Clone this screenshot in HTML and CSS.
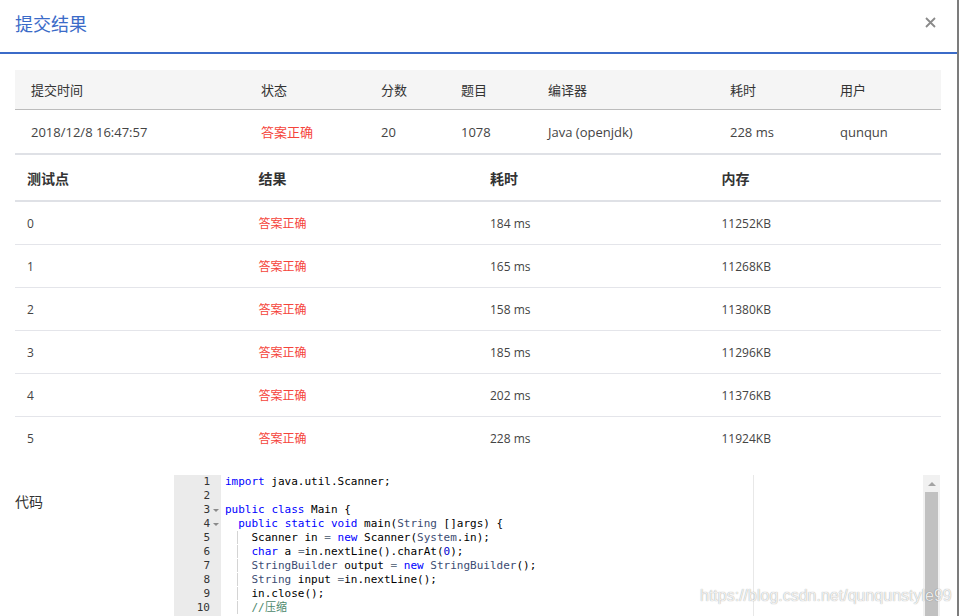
FILE: index.html
```html
<!DOCTYPE html>
<html lang="zh-CN">
<head>
<meta charset="utf-8">
<title>提交结果</title>
<link rel="stylesheet" href="styles.css">
</head>
<body>
<div class="modal">
  <div class="modal-header">
    <h1 class="title">提交结果</h1>
    <svg class="close" width="11" height="11" viewBox="0 0 11 11"><path d="M1 1L10 10M10 1L1 10" stroke="#8a8a8a" stroke-width="1.8" fill="none"/></svg>
  </div>
  <div class="modal-body">
    <div class="t1">
      <div class="t1-head">
        <div>提交时间</div><div>状态</div><div>分数</div><div>题目</div><div>编译器</div><div>耗时</div><div>用户</div>
      </div>
      <div class="t1-row">
        <div>2018/12/8 16:47:57</div><div class="ok">答案正确</div><div>20</div><div>1078</div><div>Java (openjdk)</div><div>228 ms</div><div>qunqun</div>
      </div>
    </div>
    <div class="t2">
      <div class="t2-head"><div>测试点</div><div>结果</div><div>耗时</div><div>内存</div></div>
      <div class="t2-row"><div>0</div><div class="ok">答案正确</div><div>184 ms</div><div>11252KB</div></div>
      <div class="t2-row"><div>1</div><div class="ok">答案正确</div><div>165 ms</div><div>11268KB</div></div>
      <div class="t2-row"><div>2</div><div class="ok">答案正确</div><div>158 ms</div><div>11380KB</div></div>
      <div class="t2-row"><div>3</div><div class="ok">答案正确</div><div>185 ms</div><div>11296KB</div></div>
      <div class="t2-row"><div>4</div><div class="ok">答案正确</div><div>202 ms</div><div>11376KB</div></div>
      <div class="t2-row"><div>5</div><div class="ok">答案正确</div><div>228 ms</div><div>11924KB</div></div>
    </div>
    <div class="code-section">
      <div class="code-label">代码</div>
      <div class="editor">
        <div class="gutter">
          <div class="gl">1<span class="fold"></span></div>
          <div class="gl">2<span class="fold"></span></div>
          <div class="gl">3<span class="fold"><i class="tri"></i></span></div>
          <div class="gl">4<span class="fold"><i class="tri"></i></span></div>
          <div class="gl">5<span class="fold"></span></div>
          <div class="gl">6<span class="fold"></span></div>
          <div class="gl">7<span class="fold"></span></div>
          <div class="gl">8<span class="fold"></span></div>
          <div class="gl">9<span class="fold"></span></div>
          <div class="gl">10<span class="fold"></span></div>
        </div>
        <div class="code">
          <div class="print-margin"></div>
          <div class="cl"><span class="kw">import</span> java.util.Scanner;</div>
          <div class="cl"> </div>
          <div class="cl"><span class="kw">public</span> <span class="kw">class</span> Main {</div>
          <div class="cl">  <span class="kw">public</span> <span class="kw">static</span> <span class="kw">void</span> main(<span class="sf">String</span> []args) {</div>
          <div class="cl"><span class="ind">  </span>  Scanner in <span class="op">=</span> <span class="kw">new</span> Scanner(<span class="sf">System</span>.in);</div>
          <div class="cl"><span class="ind">  </span>  <span class="kw">char</span> a <span class="op">=</span>in.nextLine().charAt(<span class="num">0</span>);</div>
          <div class="cl"><span class="ind">  </span>  <span class="sf">StringBuilder</span> output <span class="op">=</span> <span class="kw">new</span> <span class="sf">StringBuilder</span>();</div>
          <div class="cl"><span class="ind">  </span>  <span class="sf">String</span> input <span class="op">=</span>in.nextLine();</div>
          <div class="cl"><span class="ind">  </span>  in.close();</div>
          <div class="cl"><span class="ind">  </span>  <span class="cm">//压缩</span></div>
        </div>
        <div class="scrollbar">
          <div class="sb-up"><i class="sb-tri"></i></div>
          <div class="sb-thumb"></div>
        </div>
      </div>
    </div>
  </div>
  <div class="watermark">https://blog.csdn.net/qunqunstyle99</div>
</div>
</body>
</html>
```
FILE: styles.css
```css
html, body {
  margin: 0;
  padding: 0;
  background: #fff;
}
body {
  font-family: "Open Sans", "Noto Sans CJK SC", sans-serif;
  color: #444;
}
.modal {
  position: relative;
  width: 957px;
  height: 616px;
  border-right: 2px solid #7c7c7c;
  overflow: hidden;
  background: #fff;
}
.modal-header {
  height: 54px;
  box-sizing: border-box;
  border-bottom: 2px solid #3b6bc8;
  display: flex;
  align-items: center;
  justify-content: space-between;
  padding: 0 21px 7px 15px;
}
.title {
  margin: 0;
  font-size: 18px;
  font-weight: normal;
  line-height: 24px;
  color: #3b6bc8;
  font-family: "Noto Sans CJK SC", sans-serif;
}
.close {
  display: block;
}
.modal-body {
  padding: 16px 16px 0 15px;
}
.t1-head, .t1-row {
  display: grid;
  grid-template-columns: 230px 120px 80px 87px 182px 110px 117px;
  align-items: center;
  box-sizing: border-box;
  font-size: 13px;
}
.t1-head > div, .t1-row > div {
  padding-left: 16px;
}
.t1-head {
  height: 40px;
  background: #f5f5f5;
  border-bottom: 1px solid #bcbcbc;
  color: #333;
}
.t1-row {
  height: 43px;
  color: #444;
}
.ok {
  color: #f5443b;
}
.t2 {
  border-top: 2px solid #dfe1e6;
}
.t2-head, .t2-row {
  display: grid;
  grid-template-columns: repeat(4, 1fr);
  align-items: center;
  box-sizing: border-box;
}
.t2-head > div, .t2-row > div {
  padding-left: 12px;
}
.t2-head {
  height: 47px;
  border-bottom: 2px solid #dfe1e6;
  font-size: 14px;
  font-weight: bold;
  color: #333;
}
.t2-row {
  height: 43px;
  border-bottom: 1px solid #e4e5ea;
  font-size: 12px;
  color: #444;
}
.t2-row:last-child {
  border-bottom: none;
  height: 42px;
}
.code-section {
  display: flex;
  margin-top: 16px;
}
.code-label {
  width: 159px;
  flex: none;
  margin-top: 16px;
  font-size: 14px;
  line-height: 20px;
  color: #333;
  font-family: "Noto Sans CJK SC", sans-serif;
}
.editor {
  width: 766px;
  height: 141px;
  display: flex;
  font-family: "DejaVu Sans Mono", monospace;
  font-size: 11px;
  line-height: 14px;
}
.gutter {
  width: 47px;
  flex: none;
  background: #ebebeb;
  color: #333;
}
.gl {
  display: flex;
  justify-content: flex-end;
  align-items: center;
  height: 14px;
}
.fold {
  width: 11px;
  display: flex;
  align-items: center;
  padding-left: 3px;
  box-sizing: border-box;
}
.tri {
  display: block;
  width: 0;
  height: 0;
  border-left: 3px solid transparent;
  border-right: 3px solid transparent;
  border-top: 3px solid #8a8a8a;
}
.code {
  position: relative;
  flex: 1;
  padding-left: 4px;
  color: #000;
}
.cl {
  height: 14px;
  white-space: pre;
}
.print-margin {
  position: absolute;
  left: 532px;
  top: 0;
  bottom: 0;
  width: 1px;
  background: #e8e8e8;
}
.ind {
  background: linear-gradient(#d4d4d4, #d4d4d4) right top / 1px 100% no-repeat;
}
.kw { color: #0000ff; }
.sf { color: #3c4c72; }
.op { color: #687687; }
.num { color: #0000cd; }
.cm { color: #4c886b; }
.scrollbar {
  width: 17px;
  flex: none;
  background: #f1f1f1;
  display: flex;
  flex-direction: column;
  align-items: center;
}
.sb-up {
  height: 17px;
  width: 17px;
  display: flex;
  align-items: center;
  justify-content: center;
}
.sb-tri {
  display: block;
  width: 0;
  height: 0;
  border-left: 4px solid transparent;
  border-right: 4px solid transparent;
  border-bottom: 4px solid #a3a3a3;
}
.sb-thumb {
  width: 13px;
  flex: 1;
  background: #c1c1c1;
}
.watermark {
  position: absolute;
  left: 700px;
  top: 587px;
  font-family: "Liberation Sans", Arial, sans-serif;
  font-size: 16px;
  color: rgba(255, 255, 255, 0.85);
  text-shadow: 0 0 1px rgba(0, 0, 0, 0.45);
  white-space: nowrap;
}
```
